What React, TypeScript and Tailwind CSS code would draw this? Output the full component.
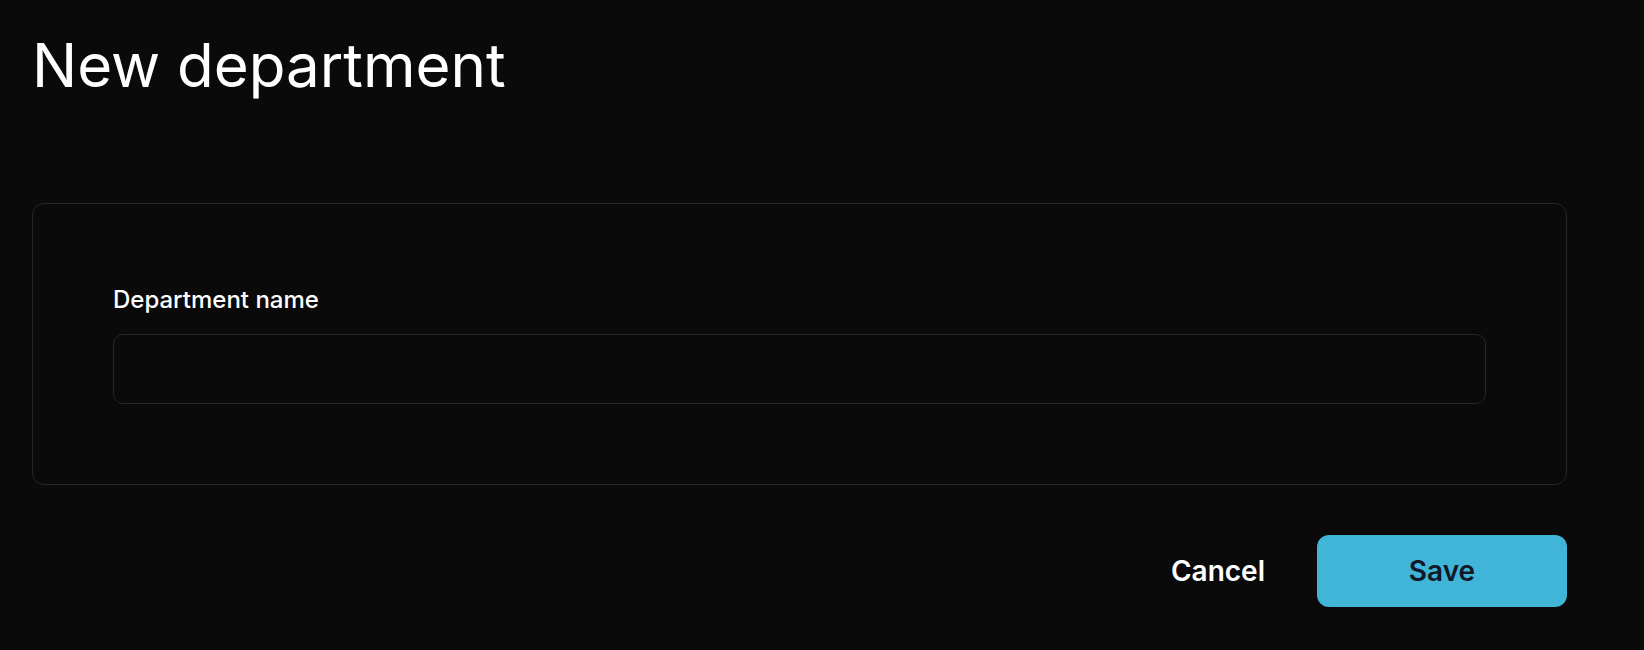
export default function App() {
  return (
    <div className="min-h-screen bg-[#0a0a0a] font-['Inter',sans-serif] text-white">
      <div className="w-[1567px] pl-8 pt-[35px] pb-10">
        <h1 className="text-[60px] leading-none font-normal">New department</h1>

        <div className="mt-[108px] rounded-xl border border-[#27272a] px-20 pt-20 pb-20">
          <label className="block text-[24px] leading-8 font-medium mb-[18px]">Department name</label>
          <input
            type="text"
            className="block w-full h-[70px] rounded-[10px] border border-[#27272a] bg-transparent px-5 text-[24px] outline-none"
          />
        </div>

        <div className="mt-[50px] flex items-center justify-end gap-[52px]">
          <button className="text-[28px] font-semibold text-white">Cancel</button>
          <button className="w-[250px] h-[72px] rounded-xl bg-[#40b5d8] text-[28px] font-semibold text-[#111827]">
            Save
          </button>
        </div>
      </div>
    </div>
  );
}
